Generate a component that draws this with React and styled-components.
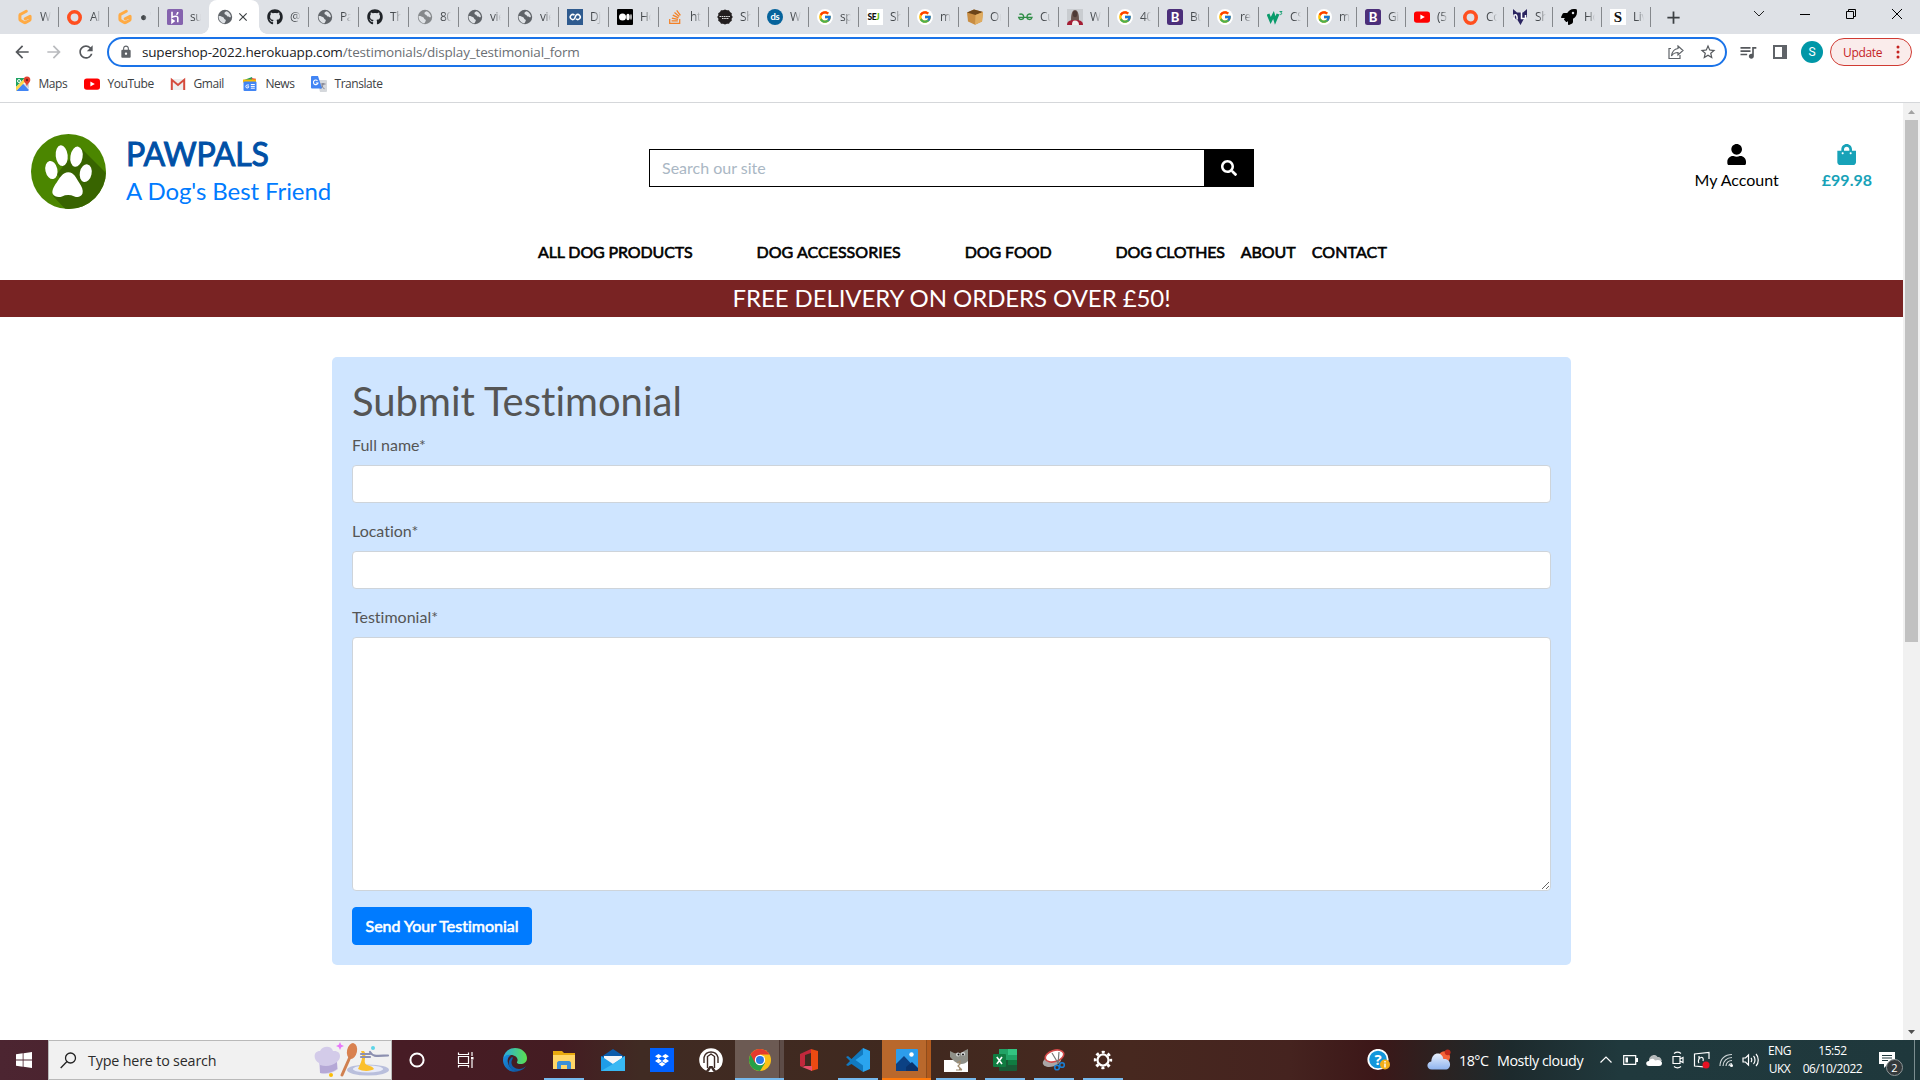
import React from "react";
import styled, { createGlobalStyle, css } from "styled-components";
import { FaGithub, FaUser, FaShoppingBag, FaSearch, FaStackOverflow, FaRocket } from "react-icons/fa";
import { FcGoogle } from "react-icons/fc";
import { MdArrowBack, MdArrowForward, MdRefresh, MdLock, MdStarBorder, MdQueueMusic, MdClose, MdAdd } from "react-icons/md";

const GlobalStyle = createGlobalStyle`
  *, *::before, *::after { box-sizing: border-box; }
  html, body { margin: 0; padding: 0; overflow: hidden; }
  body { background: #fff; font-family: "Open Sans", "Noto Sans", sans-serif; }
`;

const Screen = styled.div`
  width: 1920px;
  height: 1080px;
  display: flex;
  flex-direction: column;
  overflow: hidden;
  background: #fff;
`;

/* ---------- browser: tab strip ---------- */

const TabStrip = styled.div`
  height: 34px;
  flex: none;
  display: flex;
  padding-left: 9px;
  background: #dee1e6;
`;

const Tab = styled.div`
  position: relative;
  width: ${(p) => p.$width}px;
  height: 34px;
  flex: none;
  display: flex;
  align-items: center;
  padding-left: 8px;
  ${(p) =>
    p.$active &&
    css`
      background: #fff;
      border-radius: 8px 8px 0 0;
      z-index: 1;
      &::before,
      &::after {
        content: "";
        position: absolute;
        bottom: 0;
        width: 8px;
        height: 8px;
      }
      &::before {
        left: -8px;
        background: radial-gradient(circle at 0 0, transparent 7.5px, #fff 8px);
      }
      &::after {
        right: -8px;
        background: radial-gradient(circle at 100% 0, transparent 7.5px, #fff 8px);
      }
    `}
`;

const TabIcon = styled.span`
  width: 16px;
  height: 16px;
  flex: none;
  display: flex;
  svg {
    width: 16px;
    height: 16px;
    display: block;
  }
`;

const TabTitle = styled.span`
  width: 11px;
  margin-left: 7px;
  overflow: hidden;
  white-space: nowrap;
  font-size: 12px;
  line-height: 18px;
  letter-spacing: -0.4px;
  color: #45494d;
  mask-image: linear-gradient(90deg, #000 35%, transparent 100%);
`;

const TabSeparator = styled.span`
  width: 1px;
  height: 20px;
  margin-left: auto;
  background: #85888c;
`;

const TabClose = styled(MdClose)`
  width: 14px;
  height: 14px;
  margin-left: 3px;
  color: #3c4043;
`;

const NewTab = styled.div`
  width: 44px;
  display: flex;
  align-items: center;
  justify-content: center;
  color: #3c4043;
  font-size: 21px;
`;

const WindowControls = styled.div`
  margin-left: auto;
  height: 28px;
  display: flex;
`;

const WindowButton = styled.div`
  width: 46px;
  display: flex;
  align-items: center;
  justify-content: center;
`;

/* ---------- browser: toolbar ---------- */

const Toolbar = styled.div`
  height: 36px;
  flex: none;
  display: flex;
  align-items: center;
  padding: 0 8px 0 6px;
`;

const ToolButton = styled.div`
  width: 32px;
  flex: none;
  display: flex;
  align-items: center;
  justify-content: center;
  font-size: ${(p) => p.$size || 20}px;
  color: ${(p) => (p.$dim ? "#b9bbbe" : "#55585c")};
`;

const AddressBar = styled.div`
  width: 1620px;
  height: 30px;
  margin: 0 5px;
  flex: none;
  display: flex;
  align-items: center;
  border: 2px solid #1a73e8;
  border-radius: 15px;
  padding: 0 1px 0 10px;
  color: #5f6368;
`;

const Url = styled.span`
  margin-left: 9px;
  flex: 1;
  font-size: 13.5px;
  line-height: 20px;
  letter-spacing: -0.17px;
  color: #6b6f74;
  b {
    font-weight: 400;
    color: #202124;
  }
`;

const Avatar = styled.div`
  width: 22px;
  height: 22px;
  margin: 0 7px 0 5px;
  flex: none;
  border-radius: 50%;
  background: #0097a7;
  color: #fff;
  font: 12px/22px Roboto, sans-serif;
  text-align: center;
`;

const UpdatePill = styled.div`
  width: 82px;
  height: 28px;
  display: flex;
  align-items: center;
  justify-content: space-between;
  padding: 0 11px 0 12px;
  border: 1px solid #d03a32;
  border-radius: 14px;
  background: #faeceb;
  color: #c5221f;
  font-size: 12px;
  letter-spacing: -0.35px;
`;

const BookmarksBar = styled.div`
  height: 33px;
  flex: none;
  display: flex;
  align-items: center;
  padding: 0 0 5px 15px;
  border-bottom: 1px solid #d5d7da;
`;

const Bookmark = styled.div`
  width: ${(p) => p.$width}px;
  display: flex;
  align-items: center;
  gap: 7.5px;
  font-size: 12px;
  letter-spacing: -0.45px;
  color: #3c4043;
  svg {
    width: 16px;
    height: 16px;
    flex: none;
  }
`;

/* ---------- web page ---------- */

const Viewport = styled.div`
  height: 937px;
  flex: none;
  display: flex;
`;

const Page = styled.div`
  width: 1903px;
  flex: none;
  display: flex;
  flex-direction: column;
  font-family: Lato, sans-serif;
  font-size: 16px;
  line-height: 24px;
  font-variant-ligatures: none;
`;

const Scrollbar = styled.div`
  width: 17px;
  flex: none;
  display: flex;
  flex-direction: column;
  align-items: center;
  background: #f1f1f1;
`;

const ScrollArrow = styled.span`
  height: 17px;
  display: flex;
  align-items: center;
`;

const ScrollThumb = styled.span`
  width: 13px;
  height: 522px;
  margin-bottom: auto;
  background: #c1c1c1;
`;

const SiteHeader = styled.header`
  height: 129px;
  display: grid;
  grid-template-columns: 618px 605px 1fr;
  padding-left: 31px;
`;

const Brand = styled.div`
  display: flex;
  align-items: flex-start;
  padding-top: 31px;
  gap: 20px;
`;

const BrandText = styled.div`
  padding-top: 1px;
`;

const BrandName = styled.div`
  font-size: 32px;
  line-height: 38px;
  letter-spacing: -0.2px;
  color: #0050a6;
  -webkit-text-stroke: 1px #0050a6;
`;

const Tagline = styled.div`
  font-size: 24px;
  line-height: 36px;
  letter-spacing: -0.08px;
  color: #007bff;
`;

const SearchForm = styled.form`
  display: flex;
  height: 38px;
  margin: 46px 0 0;
`;

const SearchInput = styled.input`
  flex: 1;
  border: 1px solid #000;
  border-right: 0;
  border-radius: 0;
  padding: 6px 12px;
  font: 16px/24px Lato, sans-serif;
  outline: none;
  &::placeholder {
    color: #aab7c4;
    opacity: 1;
  }
`;

const SearchButton = styled.button`
  width: 50px;
  border: 0;
  background: #000;
  color: #fff;
  display: flex;
  align-items: center;
  justify-content: center;
  font-size: 16px;
`;

const UserLinks = styled.div`
  display: flex;
  justify-content: flex-end;
  align-items: flex-start;
  gap: 43px;
  padding: 40px 31px 0 0;
`;

const UserLink = styled.a`
  display: flex;
  flex-direction: column;
  align-items: center;
  color: ${(p) => (p.$accent ? "#17a2b8" : "#000")};
  font-weight: ${(p) => (p.$accent ? 700 : 400)};
  svg {
    width: 21.33px;
    height: 21.33px;
    margin-top: 1px;
  }
  span {
    margin-top: 3px;
    line-height: 24px;
  }
`;

const Nav = styled.nav`
  height: 48px;
  display: flex;
  align-items: center;
  padding: 0 0 8px 538px;
`;

const NavLink = styled.a`
  margin-right: ${(p) => (p.$wide ? 64 : 16)}px;
  letter-spacing: ${(p) => p.$spacing}px;
  color: #000;
  -webkit-text-stroke: 0.6px #000;
  white-space: nowrap;
`;

const Banner = styled.div`
  height: 37px;
  flex: none;
  background: #792323;
  color: #fff;
  font-size: 24px;
  line-height: 36px;
  letter-spacing: -0.08px;
  text-align: center;
`;

const FormCard = styled.form`
  width: 1239px;
  height: 608px;
  margin: 40px 0 0 332px;
  padding: 20px;
  border-radius: 5px;
  background: #cfe5ff;
  color: #555;
`;

const FormTitle = styled.h1`
  margin: 0 0 8px;
  font-size: 40px;
  line-height: 48px;
  font-weight: 400;
`;

const Field = styled.div`
  display: flex;
  flex-direction: column;
  gap: 8px;
  margin-bottom: 16px;
`;

const control = css`
  display: block;
  width: 100%;
  border: 1px solid #ced4da;
  border-radius: 4px;
  background: #fff;
  padding: 6px 12px;
  font: 16px/24px Lato, sans-serif;
`;

const TextInput = styled.input`
  ${control}
  height: 38px;
`;

const TextArea = styled.textarea`
  ${control}
  height: 254px;
`;

const SubmitButton = styled.button`
  width: 180px;
  height: 38px;
  padding: 0;
  border: 1px solid #007bff;
  border-radius: 4px;
  background: #007bff;
  color: #fff;
  font: 16px/24px Lato, sans-serif;
  font-variant-ligatures: none;
  -webkit-text-stroke: 0.6px #fff;
`;

/* ---------- taskbar ---------- */

const Taskbar = styled.div`
  height: 40px;
  flex: none;
  display: flex;
  color: #fff;
  background: linear-gradient(
    90deg,
    #4c2531 0,
    #471c25 400px,
    #441c22 560px,
    #402b23 640px,
    #40291f 900px,
    #47281f 1130px,
    #45231f 1290px,
    #3c1718 1375px,
    #2b2221 1440px,
    #1d2a2d 1510px,
    #20393d 1620px,
    #1f383c 1920px
  );
`;

const StartButton = styled.div`
  width: 48px;
  padding-left: 16px;
  display: flex;
  align-items: center;
`;

const SearchBox = styled.div`
  width: 344px;
  display: flex;
  align-items: center;
  padding: 0 1px 0 11px;
  border: 1px solid #b9b9b9;
  background: #f1f1f1;
  color: #2b2b2b;
  font-size: 14.3px;
  letter-spacing: -0.17px;
  span {
    margin-left: 11px;
    flex: 1;
  }
`;

const AppButton = styled.div`
  width: 49px;
  height: 40px;
  flex: none;
  display: flex;
  flex-direction: column;
  align-items: center;
  justify-content: space-between;
  background: ${(p) => p.$bg || "transparent"};
  &::before {
    content: "";
    height: 2px;
  }
`;

const Underline = styled.span`
  width: ${(p) => (p.$full ? 49 : 40)}px;
  height: 2px;
  background: ${(p) => p.$color || "transparent"};
`;

const Tray = styled.div`
  margin-left: auto;
  display: flex;
  align-items: center;
  font-size: 14.3px;
`;

const Slot = styled.div`
  width: ${(p) => p.$width}px;
  margin-left: ${(p) => p.$gap || 0}px;
  flex: none;
  display: flex;
  justify-content: ${(p) => (p.$start ? "flex-start" : "center")};
  white-space: nowrap;
  letter-spacing: ${(p) => p.$spacing || 0}px;
`;

const Stack = styled.div`
  width: ${(p) => p.$width}px;
  display: flex;
  flex-direction: column;
  align-items: center;
  font-size: 12px;
  line-height: 18px;
  letter-spacing: ${(p) => p.$spacing}px;
  padding-bottom: 1px;
`;

const Notifications = styled.div`
  position: relative;
  width: 47px;
  height: 40px;
  padding: 12px 0 0 11px;
  border-right: 1px solid #7b8d90;
`;

const Badge = styled.span`
  position: absolute;
  left: 18px;
  top: 19px;
  width: 17px;
  height: 17px;
  border: 1px solid #8f9799;
  border-radius: 50%;
  background: #33393b;
  font-size: 11px;
  line-height: 15px;
  text-align: center;
`;

const TrayEnd = styled.span`
  width: 5px;
`;

/* ---------- favicons ---------- */

const Gitpod = () => (
  <svg viewBox="0 0 16 16">
    <path d="M9.300 2.200 3.700 5.200a1.400 1.400 0 0 0-.8 1.200v3.800c0 .6.3 1 .8 1.300l3.500 2c.5.3 1 .3 1.500 0l3.600-2c.5-.3.800-.7.800-1.300V7.200L8.200 9.900" fill="none" stroke="#ffab45" strokeWidth="3" strokeLinecap="round" strokeLinejoin="round" />
  </svg>
);
const Ring = () => (
  <svg viewBox="0 0 16 16">
    <circle cx="7.500" cy="8.500" r="5.700" fill="none" stroke="#ff4f1f" strokeWidth="3.600" />
  </svg>
);
const Heroku = () => (
  <svg viewBox="0 0 16 16">
    <rect width="16" height="16" rx="1.600" fill="#8563ae" />
    <path d="M5 2.800v5.600c2-1 5.800-2 5.800.4v4.400M5 10.600l2 1.500-2 1.500zM10.800 3c0 1.300-.5 2-1.300 2.800" fill="none" stroke="#fff" strokeWidth="1.600" />
  </svg>
);
const Globe = ({ light }) => (
  <svg viewBox="0 0 16 16">
    <circle cx="8" cy="8" r="7.200" fill={light ? "#85888b" : "#5f6368"} />
    <path d="M1.500 7.200c1.800-.6 3 .4 4.600 1 1.500.5.6 2 2 2.200 1.600.2.2 2.400-.6 3.900-3-.2-5.800-2.700-6-7.100zM9.500 2.200c-1.400.7-2.400 1.300-1.900 2.700.6 1 1.900.3 2.100 1.600.3 1.200 1.800.7 2.500 1.400.5.6 1.300.3 1.700.1-.1-2.800-2-5-4.400-5.800z" fill="#dfe2e6" />
  </svg>
);
const Github = () => <FaGithub color="#1f2328" />;
const Letter = ({ bg, fg = "#fff", text, size = 12, round = 0, font = "Lato", x = 8, y = 12.4, weight = 700, spacing = 0 }) => (
  <svg viewBox="0 0 16 16">
    <rect width="16" height="16" rx={round} fill={bg} />
    <text x={x} y={y} fill={fg} fontFamily={font} fontSize={size} fontWeight={weight} textAnchor="middle" letterSpacing={spacing}>
      {text}
    </text>
  </svg>
);
const CodeRing = () => (
  <svg viewBox="0 0 16 16">
    <rect width="16" height="16" fill="#2f5b8f" />
    <path d="M7.500 6.200a2.500 2.500 0 1 0 0 3.600L9 6.200a2.500 2.500 0 1 1 0 3.600" fill="none" stroke="#fff" strokeWidth="1.500" />
  </svg>
);
const Medium = () => (
  <svg viewBox="0 0 16 16">
    <rect width="16" height="16" rx="1" fill="#000" />
    <circle cx="5.500" cy="8" r="3.500" fill="#fff" />
    <ellipse cx="11" cy="8" rx="1.700" ry="3.200" fill="#fff" />
    <ellipse cx="14" cy="8" rx=".7" ry="2.900" fill="#fff" />
  </svg>
);
const StackExchange = () => <FaStackOverflow color="#f48024" />;
const Blob = () => (
  <svg viewBox="0 0 16 16">
    <path d="M8 .5l2 .8 2-.1 1 1.800 1.800 1.200-.2 2 1.200 1.800-1.200 1.800.2 2-1.800 1.200-1 1.800-2-.1-2 .8-2-.8-2 .1-1-1.800L1.200 11.800l.2-2L.2 8l1.200-1.800-.2-2L3 3l1-1.800 2 .1z" fill="#231f20" />
    <path d="M2.500 7.500h11M5 9.500h7" stroke="#ddd" strokeWidth="1.100" strokeDasharray="1.600 .6" />
  </svg>
);
const Google = () => (
  <svg viewBox="0 0 16 16">
    <circle cx="8" cy="8" r="8" fill="#fff" />
    <FcGoogle x="1" y="1" style={{ width: 14, height: 14 }} />
  </svg>
);
const Sej = () => (
  <svg viewBox="0 0 16 16">
    <rect width="16" height="16" fill="#fff" />
    <text x="0.500" y="11" fontFamily="Lato" fontWeight="900" fontSize="8.500" letterSpacing="-.5" fill="#111">
      SE<tspan fill="#5cb800">J</tspan>
    </text>
  </svg>
);
const Box = () => (
  <svg viewBox="0 0 16 16">
    <path d="M0 3.500 7 .5l9 2.500-1 9.500-7 3.200L1 12.500z" fill="#c98d42" />
    <path d="M0 3.500 7 .5l9 2.500-7.500 3z" fill="#6c4519" />
    <path d="M8.500 6 16 3l-1 9.500-7 3.200z" fill="#e0ac60" />
  </svg>
);
const Geeks = () => (
  <svg viewBox="0 0 16 16">
    <path d="M2.300 5.400c2.400-1 4.400 0 4.400 2.600 0 2.700-4.200 3.600-5 .4H15c-.8 3.200-5 2.300-5-.4 0-2.600 2-3.600 4.400-2.600" fill="none" stroke="#2f8d46" strokeWidth="1.400" />
  </svg>
);
const Portrait = () => (
  <svg viewBox="0 0 16 16">
    <rect width="16" height="16" fill="#c9ccd0" />
    <path d="M4 12c0-7 1-11 4-11s4 4 4 11z" fill="#6b5650" />
    <path d="M0 16c0-4 3-5 8-5s8 1 8 5z" fill="#a51d34" />
    <path d="M5 16c0-3 .5-4.500 3-4.500s4 1.500 4 4.500z" fill="#eee" />
    <ellipse cx="8" cy="5" rx="2.200" ry="3.300" fill="#4d3a36" />
  </svg>
);
const Bootstrap = () => <Letter bg="#4c2f7a" text="B" size={13} round={2.5} y={12.6} weight={900} />;
const W3 = () => (
  <svg viewBox="0 0 16 16">
    <path d="M1 5l2.700 6.500L6.500 6l1.700 5.500L11 5" fill="none" stroke="#0a9b6b" strokeWidth="3" />
    <path d="M12.500 2.500H15L13.700 4c1.500 0 1.500 1.800-1 1.600" fill="none" stroke="#0a9b6b" strokeWidth=".9" />
  </svg>
);
const YouTube = () => (
  <svg viewBox="0 0 16 16">
    <rect y="2.400" width="16" height="11.400" rx="2.800" fill="#f00" />
    <path d="M6.400 5.600v5l4.400-2.500z" fill="#fff" />
  </svg>
);
const Nu = () => (
  <svg viewBox="0 0 16 16">
    <path d="M1 0l4 3.500h6L15 0v8l-3.500 2.500L8.500 16l-3-5L1 8z" fill="#2b2560" />
    <path d="M2 10.500V6.200c2.500-1 3.200 0 3.200 4.300M9.500 3v6.500h4V6" fill="none" stroke="#fff" strokeWidth="1.500" />
  </svg>
);
const Rocket = () => <FaRocket color="#000" />;
const Serif = () => <Letter bg="#fff" fg="#111" text="S" size={15} font="Liberation Serif" y={13} />;
const Ds = () => <Letter bg="#06639c" text="ds" size={9.5} round={8} y={11} spacing={-0.3} />;
const LightGlobe = () => <Globe light />;

const tabs = [
  [Gitpod, "W"], [Ring, "Al"], [Gitpod, "● '"], [Heroku, "su"], [Globe, null], [Github, "@"], [Globe, "Pa"], [Github, "Th"],
  [LightGlobe, "80"], [Globe, "vie"], [Globe, "vie"], [CodeRing, "Dj"], [Medium, "Ho"], [StackExchange, "ht"], [Blob, "Sh"],
  [Ds, "W"], [Google, "sp"], [Sej, "Sh"], [Google, "m"], [Box, "Or"], [Geeks, "Cu"], [Portrait, "W"], [Google, "40"],
  [Bootstrap, "Bu"], [Google, "re"], [W3, "CS"], [Google, "m"], [Bootstrap, "Gi"], [YouTube, "(5"], [Ring, "Co"],
  [Nu, "Sh"], [Rocket, "Ho"], [Serif, "Liv"],
];

/* ---------- bookmark icons ---------- */

const Maps = () => (
  <svg viewBox="0 0 16 16">
    <path d="M1 2h9l-9 9z" fill="#1ea362" />
    <path d="M1 15 8 7.500l6 6.500-1 1z" fill="#4285f4" />
    <path d="M1 11 10 2l2 2L1 15z" fill="#ffd84d" />
    <path d="M8.500 8 14 13V7z" fill="#d3d6d8" />
    <path d="M12 .5A3.400 3.400 0 0 1 15.300 4c0 2.500-2.500 3-3.300 6.500C11.200 7 8.700 6.500 8.700 4A3.400 3.400 0 0 1 12 .5z" fill="#e2402f" />
    <circle cx="12" cy="4" r="1.200" fill="#7b1d14" />
    <circle cx="4" cy="5" r="1.500" fill="none" stroke="#fff" />
  </svg>
);
const Gmail = () => (
  <svg viewBox="0 0 16 16">
    <rect x="1" y="3" width="14" height="11" fill="#eee" />
    <path d="M1.800 14V3.800L8 9l6.200-5.200V14" fill="none" stroke="#d54b3d" strokeWidth="2" />
  </svg>
);
const News = () => (
  <svg viewBox="0 0 16 16">
    <path d="M2 4l8-3 1 4z" fill="#1e9e58" />
    <path d="M9 2l5 .8-1 4z" fill="#ea4335" />
    <path d="M1 3.500h13v3H1z" fill="#fbbc04" />
    <rect x="1.500" y="5.500" width="13" height="9.500" rx="1" fill="#4285f4" />
    <path d="M7 9H5.200a1.500 1.500 0 1 0 1.600 1.700H5.500M8.800 8.500h4M8.800 10.400h4M8.800 12.200h4" fill="none" stroke="#fff" />
  </svg>
);
const Translate = () => (
  <svg viewBox="0 0 16 16">
    <path d="M6 4h9a1 1 0 0 1 1 1v10a1 1 0 0 1-1 1H9z" fill="#d5d8dc" />
    <path d="M9.500 8h5M12 7v1c-.3 2-1 3.500-2.500 4.500M10.500 9.500c.5 1.500 1.500 2.500 3 3.200" fill="none" stroke="#667" strokeWidth=".8" />
    <path d="M1 0h6l4 12.500H1a1 1 0 0 1-1-1V1a1 1 0 0 1 1-1z" fill="#4285f4" />
    <path d="M6.500 4.800A2.300 2.300 0 1 0 7 7H4.800" fill="none" stroke="#fff" strokeWidth="1.100" />
  </svg>
);

const bookmarks = [
  [Maps, "Maps", 69], [YouTube, "YouTube", 86], [Gmail, "Gmail", 72], [News, "News", 69], [Translate, "Translate", 80],
];

/* ---------- page artwork ---------- */

const PawLogo = () => (
  <svg width="75" height="75" viewBox="0 0 75 75">
    <clipPath id="disc">
      <circle cx="37.500" cy="37.500" r="37.500" />
    </clipPath>
    <g clipPath="url(#disc)">
      <rect width="75" height="75" fill="#4b8600" />
      <path d="M50 14 80 44V80H39L22 62l10-14-6-8 8-10z" fill="#386400" />
      <path d="M36 37 28 28l4 1 7 8z" fill="#386400" />
    </g>
    <g fill="#fff">
      <ellipse cx="30.700" cy="21.700" rx="6" ry="10.400" transform="rotate(-6 30.700 21.700)" />
      <ellipse cx="45.500" cy="22.700" rx="6.100" ry="10.200" transform="rotate(10 45.500 22.700)" />
      <ellipse cx="20.400" cy="36" rx="6" ry="9.200" transform="rotate(-12 20.400 36)" />
      <ellipse cx="54.700" cy="39.200" rx="5.900" ry="9" transform="rotate(12 54.700 39.200)" />
      <path d="M37.200 38.300c6 0 8 6 11 10.500 2.500 3.800 4.300 7.500 3.300 10.800-1.200 3.700-5.500 3.900-8 2.800-4.500-1.800-8.500-1.800-12.500 0-2.500 1-7.500 1-9.300-2.600-1.200-3 1.500-8 4-11.200 3-4.500 6-10.300 11.500-10.300z" />
    </g>
  </svg>
);

const CaretUp = () => (
  <svg width="7" height="4" viewBox="0 0 7 4"><path d="M0 4 3.500 0 7 4z" fill="#a3a3a3" /></svg>
);
const CaretDown = () => (
  <svg width="7" height="4" viewBox="0 0 7 4"><path d="M0 0 3.500 4 7 0z" fill="#505050" /></svg>
);

/* ---------- taskbar icons ---------- */

const line = { fill: "none", stroke: "#fff", strokeWidth: 1.2 };

const SearchArt = () => (
  <svg width="76" height="36" viewBox="0 0 76 36">
    <path d="M6 31 5 21C-1 18-1 9 6 9c3-6 12-5 13 0 8-1 9 7 4 11l1 7c-5 4-12 6-18 4z" fill="#d3cbe9" />
    <path d="M6 23c6 2 12 1 17-3v7c-5 4-12 5-17 4z" fill="#b5a8d6" />
    <path d="M26 0l1.200 2.800L30 4l-2.800 1.200L26 8l-1.200-2.800L22 4l2.800-1.200z" fill="#e879f9" />
    <ellipse cx="38" cy="9" rx="5" ry="8" fill="#d9814f" transform="rotate(12 38 9)" />
    <path d="M36 15 28 33" stroke="#d08050" strokeWidth="3" strokeLinecap="round" />
    <ellipse cx="54" cy="28" rx="21" ry="5.500" fill="#b9bfdc" />
    <ellipse cx="54" cy="27" rx="15" ry="3.500" fill="#e8ebf8" />
    <path d="M47 9c3 5 0 12-3 18 5 3 14 2 16 0-2-4-8-3-9-6-1-4 2-8-1-12z" fill="#fbc02d" />
    <path d="M47 12h9M47 15h9M56 10c3 5 6 4 18 3.500" fill="none" stroke="#8c90b0" strokeWidth="2.200" strokeLinecap="round" />
    <circle cx="59" cy="6" r="2" fill="#5dd5e8" />
    <circle cx="17" cy="33" r="2" fill="#fbbc04" />
  </svg>
);

const Cortana = () => (
  <svg width="20" height="20" viewBox="0 0 20 20"><circle cx="10" cy="10" r="6.600" fill="none" stroke="#fff" strokeWidth="2" /></svg>
);
const TaskView = () => (
  <svg width="18" height="18" viewBox="0 0 18 18" {...line}>
    <path d="M1.500 1.500v2h10v-2M1.500 16.500v-2h10v2M1.500 5.500h10v7h-10zM15 1v4M15 9v8" />
    <path d="M14 6h2.500v2.500H14z" fill="#fff" stroke="none" />
  </svg>
);
const Edge = () => (
  <svg width="24" height="24" viewBox="0 0 24 24">
    <defs>
      <linearGradient id="edgeTop" x1="0" x2="1"><stop offset="0" stopColor="#2aa9e0" /><stop offset="1" stopColor="#5be04f" /></linearGradient>
      <linearGradient id="edgeLow" x1="0" y1="0" x2="1" y2="1"><stop offset="0" stopColor="#1b8fe0" /><stop offset="1" stopColor="#0c57a4" /></linearGradient>
    </defs>
    <path d="M0 11C1 4 6 0 12 0c7 0 12 5 12 10 0 4-3 6-6.500 6-3 0-4-1-3.500-2 2-3-1-7-6-7-4 0-7 2-8 4z" fill="url(#edgeTop)" />
    <path d="M0 12c0-4 4-6 8-5-3 2-4 5-3 8 1 5 6 8 11 8-8 3-16-3-16-11z" fill="url(#edgeLow)" />
    <path d="M9 12c-2 5 2 9 7 9 3 0 5-1 7-3-3 5-9 6-13 4-5-3-6-9-1-13 1 0 1 1 0 3z" fill="#0f5fae" />
  </svg>
);
const Explorer = () => (
  <svg width="22" height="18" viewBox="0 0 22 18">
    <path d="M0 0h9l2 2h11v16H0z" fill="#e8a90e" />
    <path d="M0 4h22v14H0z" fill="#ffd667" />
    <path d="M4 18v-6c0-1 1-2 2-2h10c1 0 2 1 2 2v6h-4v-4H8v4z" fill="#3a8fd8" />
  </svg>
);
const Mail = () => (
  <svg width="24" height="22" viewBox="0 0 24 22">
    <path d="M0 8 12 0l12 8v4H0z" fill="#0b5cab" />
    <path d="M3 7h18v8H3z" fill="#f4f6f8" />
    <path d="M0 7l12 8L24 7v15H0z" fill="#1f9de8" />
    <path d="M0 22 12 15l12-8v15z" fill="#38b8f3" />
  </svg>
);
const Dropbox = () => (
  <svg width="24" height="24" viewBox="0 0 24 24">
    <rect width="24" height="24" fill="#0061ff" />
    <path d="M8.500 6l3.500 2.300-3.500 2.300L5 8.300zM15.500 6 19 8.300l-3.500 2.300L12 8.300zM8.500 10.600l3.500 2.300-3.500 2.300L5 12.900zM15.500 10.600l3.500 2.300-3.500 2.300-3.500-2.300zM12 13.900l3.500 2.200-3.500 2.300-3.500-2.300z" fill="#fff" />
  </svg>
);
const Arch = () => (
  <svg width="24" height="24" viewBox="0 0 24 24">
    <circle cx="12" cy="12" r="11.800" fill="#fff" />
    <path d="M5 15V9.500C6 5.500 8.500 4 12 4s6 1.500 7 5.500V15M8.500 20V8.500L12 6l3.500 2.500V20" fill="none" stroke="#3d2b26" strokeWidth="1.400" />
    <path d="M7 23l3.500-5h3L17 23l-5 1z" fill="#3d2b26" />
    <path d="M9.500 24 12 20l2.500 4z" fill="#fff" />
  </svg>
);
const Chrome = () => (
  <svg width="22" height="22" viewBox="0 0 22 22">
    <circle cx="11" cy="11" r="11" fill="#fbc116" />
    <path d="M11 11 1.500 5.500A11 11 0 0 0 11 22l5-8z" fill="#26a047" />
    <path d="M11 11 6 13.800 1.500 5.500A11 11 0 0 1 20.500 5.500H11z" fill="#e33b2e" />
    <circle cx="11" cy="11" r="5.200" fill="#fff" />
    <circle cx="11" cy="11" r="4" fill="#2a78e4" />
  </svg>
);
const Office = () => (
  <svg width="18" height="22" viewBox="0 0 18 22">
    <path d="M0 5 11 0v4L5 6v10l-3 2-2-1z" fill="#c2283c" />
    <path d="M11 0l7 2v18l-7 2z" fill="#eb4a12" />
    <path d="M2 18l3-1h7v5z" fill="#e8506a" />
  </svg>
);
const VsCode = () => (
  <svg width="24" height="24" viewBox="0 0 24 24">
    <path d="M17 0 5.500 11 2 8 0 9l4 4-4 4 2 1 3.500-2L17 24l1-6V6z" fill="#1179bf" />
    <path d="M17 0l7 3v18l-7 3V6.500L9.500 12 17 17.500z" fill="#2aa4ee" />
  </svg>
);
const Photos = () => (
  <svg width="22" height="22" viewBox="0 0 22 22">
    <rect width="22" height="22" rx="1" fill="#2d9dec" />
    <path d="M0 15 8 7l14 15H0z" fill="#0c4184" />
    <path d="M10 18l6-5 6 6v3H10z" fill="#0a326c" />
    <circle cx="15.500" cy="5.500" r="2.200" fill="#fff" />
  </svg>
);
const Gimp = () => (
  <svg width="24" height="24" viewBox="0 0 24 24">
    <rect y="12" width="24" height="12" fill="#fff" />
    <path d="M6 3l4 2c4 1 8 0 10-2l4-2v12c-4 5-12 3-15-1L6 9z" fill="#8f9088" />
    <circle cx="14" cy="6.500" r="2" fill="#ddd" /><circle cx="19" cy="6" r="2" fill="#ddd" />
    <circle cx="14.500" cy="6.500" r="1" fill="#111" /><circle cx="19" cy="6.500" r="1" fill="#111" />
    <path d="M13 15l3-2v3l-2 2 3 3h-2M12 22h6" stroke="#a08c70" fill="none" strokeWidth="1.200" />
  </svg>
);
const Excel = () => (
  <svg width="24" height="22" viewBox="0 0 24 22">
    <rect x="6" width="18" height="22" rx="1" fill="#185c37" />
    <path d="M6 0h9v11H6z" fill="#21a366" /><path d="M15 0h9v6h-9z" fill="#33c481" /><path d="M15 6h9v5h-9z" fill="#21a366" /><path d="M15 11h9v5h-9z" fill="#107c41" />
    <rect y="5" width="13" height="13" rx="1" fill="#107c41" />
    <path d="M3.800 8l5.200 7M9 8l-5.200 7" stroke="#fff" strokeWidth="1.600" />
  </svg>
);
const Snip = () => (
  <svg width="24" height="23" viewBox="0 0 24 23">
    <ellipse cx="10" cy="12" rx="9.500" ry="5.500" fill="#aaa6a6" transform="rotate(-18 10 12)" />
    <ellipse cx="12.500" cy="7" rx="9.500" ry="5.600" fill="#fff" stroke="#d44949" strokeWidth="1.600" transform="rotate(-18 12.500 7)" />
    <path d="M10 4l6 10M17 3l-1 12" stroke="#777" strokeWidth="1.200" />
    <circle cx="15" cy="18.500" r="2.300" fill="none" stroke="#1a7fd4" strokeWidth="1.600" />
    <circle cx="20" cy="16" r="2.300" fill="none" stroke="#1a7fd4" strokeWidth="1.600" />
  </svg>
);
const Gear = () => (
  <svg width="20" height="20" viewBox="0 0 20 20">
    <circle cx="10" cy="10" r="5.500" fill="none" stroke="#fff" strokeWidth="2.200" />
    <circle cx="10" cy="10" r="7.800" fill="none" stroke="#fff" strokeWidth="2.800" strokeDasharray="3 3.126" strokeDashoffset="1.500" />
  </svg>
);

const blue = "#76b9ed";
const apps = [
  { Icon: Cortana }, { Icon: TaskView }, { Icon: Edge }, { Icon: Explorer, bar: blue }, { Icon: Mail }, { Icon: Dropbox }, { Icon: Arch },
  { Icon: Chrome, bar: blue, full: true, bg: "linear-gradient(90deg, #6c5a53 44px, #4a3630 44px, #4a3630 45px, #5d4c47 45px)" },
  { Icon: Office }, { Icon: VsCode, bar: blue },
  { Icon: Photos, bar: "#ff7a0c", full: true, bg: "linear-gradient(90deg, #b9682c 44px, #8f4c1b 44px, #8f4c1b 45px, #b05a1e 45px)" },
  { Icon: Gimp, bar: blue }, { Icon: Excel, bar: blue }, { Icon: Snip, bar: blue }, { Icon: Gear, bar: blue },
];

const trayIcons = [
  <svg key="up" width="14" height="10" viewBox="0 0 14 10" {...line}><path d="M1.500 7.500 7 2l5.500 5.500" /></svg>,
  <svg key="bat" width="15" height="12" viewBox="0 0 15 12" {...line}><path d="M.7 1.700h12v8.600H.7z" /><path d="M2.500 3.500H5v5H2.500zM13 4h2v4h-2z" fill="#fff" stroke="none" /></svg>,
  <svg key="cloud" width="16" height="12" viewBox="0 0 16 12"><path d="M3 6C3 2 9-1 11.500 3 15 3 15 5 16 7L4 9z" fill="#b5babb" /><path d="M3 12c-4-.5-3.500-5 0-5 1-3 5-3 6-.5C13 5 16 7 16 9s-1 3-3 3z" fill="#fff" /></svg>,
  <svg key="cam" width="14" height="18" viewBox="0 0 14 18" {...line}><path d="M2 5.500h7v7H2zM9 8l3-1.500v5L9 10M3 2.500C5 1 8 1 10 2.500M3 15.500c2 1.500 5 1.500 7 0" /></svg>,
  <svg key="upd" width="18" height="18" viewBox="0 0 18 18" {...line}><path d="M16 8V1.500L1.500 3v12l9 .8M8 6.500C5 7 5 11 6 12M6 7.500V5M10 10c1-3-1-4-2-3.500" /><circle cx="13" cy="14" r="3.500" fill="#e81123" stroke="none" /></svg>,
  <svg key="wifi" width="14" height="14" viewBox="0 0 14 14" {...line} stroke="#cfd6d7"><path d="M1 13C1 6 6 1.500 13 1.500M4 13c0-5 4-8.500 9-8.500M7 13c0-3 2.500-5.500 6-5.500M10 13c0-1.500 1-2.500 3-2.500" /><circle cx="12.500" cy="12.500" r="1.500" fill="#fff" stroke="none" /></svg>,
  <svg key="vol" width="17" height="14" viewBox="0 0 17 14" {...line}><path d="M1 5h2.500L6.500 2v10l-3-3H1zM9 5c1 1 1 3 0 4M11.500 3c2 2 2 6 0 8M14 1c3 3 3 9 0 12" /></svg>,
];

const HelpIcon = () => (
  <svg width="24" height="22" viewBox="0 0 24 22">
    <circle cx="11" cy="10.500" r="9.700" fill="#1296db" stroke="#fff" strokeWidth="1.800" />
    <text x="11" y="16" fill="#fff" fontSize="15" fontWeight="700" textAnchor="middle" fontFamily="Open Sans">?</text>
    <circle cx="18" cy="15.500" r="5" fill="#f3ae1b" />
    <path d="M18 14.500v4M18 12v1.500" stroke="#fff" strokeWidth="1.400" />
  </svg>
);
const WeatherIcon = () => (
  <svg width="25" height="22" viewBox="0 0 25 22">
    <defs><linearGradient id="cl" x2="0" y2="1"><stop offset="0" stopColor="#e8f0fd" /><stop offset="1" stopColor="#8eb3ee" /></linearGradient></defs>
    <circle cx="18" cy="8" r="6" fill="#f4633a" />
    <circle cx="21.500" cy="3" r="3" fill="#c42b1c" />
    <path d="M5 21c-6 0-6-8-.5-8.500C5 2 16 2 17 10c9-1 9 11 2 11z" fill="url(#cl)" />
  </svg>
);

const nav = [
  { label: "ALL DOG PRODUCTS", wide: true, spacing: -0.13 },
  { label: "DOG ACCESSORIES", wide: true, spacing: 0.02 },
  { label: "DOG FOOD", wide: true, spacing: -0.07 },
  { label: "DOG CLOTHES", wide: false, spacing: -0.16 },
  { label: "ABOUT", wide: false, spacing: -0.08 },
  { label: "CONTACT", wide: false, spacing: 0.12 },
];

export default function App() {
  return (
    <Screen>
      <GlobalStyle />
      <TabStrip>
        {tabs.map(([Icon, title], i) => (
          <Tab key={i} $width={i < 25 ? 50 : 49} $active={title === null}>
            <TabIcon><Icon /></TabIcon>
            {title === null ? <TabClose /> : <TabTitle>{title}</TabTitle>}
            {title !== null && i !== 3 && <TabSeparator />}
          </Tab>
        ))}
        <NewTab><MdAdd /></NewTab>
        <WindowControls>
          <WindowButton><svg width="12" height="8" fill="none" stroke="#222"><path d="M1 1l5 5 5-5" /></svg></WindowButton>
          <WindowButton><svg width="10" height="1"><rect width="10" height="1" /></svg></WindowButton>
          <WindowButton><svg width="11" height="11" fill="none" stroke="#000"><path d="M.5 2.500h7v7h-7zM2.500 2.500v-2h7v7h-2" /></svg></WindowButton>
          <WindowButton><svg width="12" height="12" fill="none" stroke="#000"><path d="M1 1l10 10M11 1 1 11" /></svg></WindowButton>
        </WindowControls>
      </TabStrip>
      <Toolbar>
        <ToolButton><MdArrowBack /></ToolButton>
        <ToolButton $dim><MdArrowForward /></ToolButton>
        <ToolButton><MdRefresh /></ToolButton>
        <AddressBar>
          <MdLock size={14} />
          <Url><b>supershop-2022.herokuapp.com</b>/testimonials/display_testimonial_form</Url>
          <ToolButton>
            <svg width="16" height="14" viewBox="0 0 16 14" fill="none" stroke="#5f6368" strokeWidth="1.200"><path d="M3 3.500H1v10h11V10M10 1l5 4.500L10 10V7.500C7 7.500 5 8.500 3.500 11 4 7 6 4 10 3.500z" /></svg>
          </ToolButton>
          <ToolButton $size={18}><MdStarBorder /></ToolButton>
        </AddressBar>
        <ToolButton><MdQueueMusic /></ToolButton>
        <ToolButton>
          <svg width="14" height="14"><rect x="1" y="1" width="12" height="12" fill="none" stroke="#5f6368" strokeWidth="2" /><rect x="9" width="5" height="14" fill="#5f6368" /></svg>
        </ToolButton>
        <Avatar>S</Avatar>
        <UpdatePill>
          Update
          <svg width="4" height="14" fill="#c5221f"><circle cx="2" cy="2" r="1.500" /><circle cx="2" cy="7" r="1.500" /><circle cx="2" cy="12" r="1.500" /></svg>
        </UpdatePill>
      </Toolbar>
      <BookmarksBar>
        {bookmarks.map(([Icon, label, width]) => (
          <Bookmark key={label} $width={width}><Icon />{label}</Bookmark>
        ))}
      </BookmarksBar>
      <Viewport>
        <Page>
          <SiteHeader>
            <Brand>
              <PawLogo />
              <BrandText>
                <BrandName>PAWPALS</BrandName>
                <Tagline>A Dog's Best Friend</Tagline>
              </BrandText>
            </Brand>
            <SearchForm>
              <SearchInput placeholder="Search our site" />
              <SearchButton type="button"><FaSearch /></SearchButton>
            </SearchForm>
            <UserLinks>
              <UserLink><FaUser /><span>My Account</span></UserLink>
              <UserLink $accent><FaShoppingBag /><span>£99.98</span></UserLink>
            </UserLinks>
          </SiteHeader>
          <Nav>
            {nav.map(({ label, wide, spacing }) => (
              <NavLink key={label} $wide={wide} $spacing={spacing}>{label}</NavLink>
            ))}
          </Nav>
          <Banner>FREE DELIVERY ON ORDERS OVER £50!</Banner>
          <FormCard>
            <FormTitle>Submit Testimonial</FormTitle>
            <Field><label>Full name*</label><TextInput /></Field>
            <Field><label>Location*</label><TextInput /></Field>
            <Field><label>Testimonial*</label><TextArea /></Field>
            <SubmitButton type="button">Send Your Testimonial</SubmitButton>
          </FormCard>
        </Page>
        <Scrollbar>
          <ScrollArrow><CaretUp /></ScrollArrow>
          <ScrollThumb />
          <ScrollArrow><CaretDown /></ScrollArrow>
        </Scrollbar>
      </Viewport>
      <Taskbar>
        <StartButton>
          <svg width="16" height="16" viewBox="0 0 16 16" fill="#fff"><path d="M0 2.300 6.700 1.300v6.300H0zM7.500 1.200 16 0v7.600H7.500zM0 8.400h6.700v6.300L0 13.700zM7.500 8.400H16V16l-8.500-1.200z" /></svg>
        </StartButton>
        <SearchBox>
          <svg width="17" height="17" viewBox="0 0 17 17" fill="none" stroke="#222" strokeWidth="1.300"><circle cx="10.500" cy="6" r="5" /><path d="M7 9.500.7 16" /></svg>
          <span>Type here to search</span>
          <SearchArt />
        </SearchBox>
        {apps.map(({ Icon, bar, full, bg }, i) => (
          <AppButton key={i} $bg={bg}><Icon /><Underline $color={bar} $full={full} /></AppButton>
        ))}
        <Tray>
          <Slot $width={48}><HelpIcon /></Slot>
          <Slot $width={24} $gap={24}><WeatherIcon /></Slot>
          <Slot $width={38} $gap={8} $start $spacing={-0.5}>18°C</Slot>
          <Slot $width={97} $start $spacing={-0.42}>Mostly cloudy</Slot>
          {trayIcons.map((icon, i) => <Slot key={i} $width={24}>{icon}</Slot>)}
          <Stack $width={35} $spacing={-0.5}><span>ENG</span><span>UKX</span></Stack>
          <Stack $width={71} $spacing={-0.4}><span>15:52</span><span>06/10/2022</span></Stack>
          <Notifications>
            <svg width="16" height="16" viewBox="0 0 16 16"><path d="M0 0h16v12H9l-4 4v-4H0z" fill="#fff" /><path d="M3 3.500h10M3 6h10M3 8.500h6" stroke="#20393d" /></svg>
            <Badge>2</Badge>
          </Notifications>
          <TrayEnd />
        </Tray>
      </Taskbar>
    </Screen>
  );
}
